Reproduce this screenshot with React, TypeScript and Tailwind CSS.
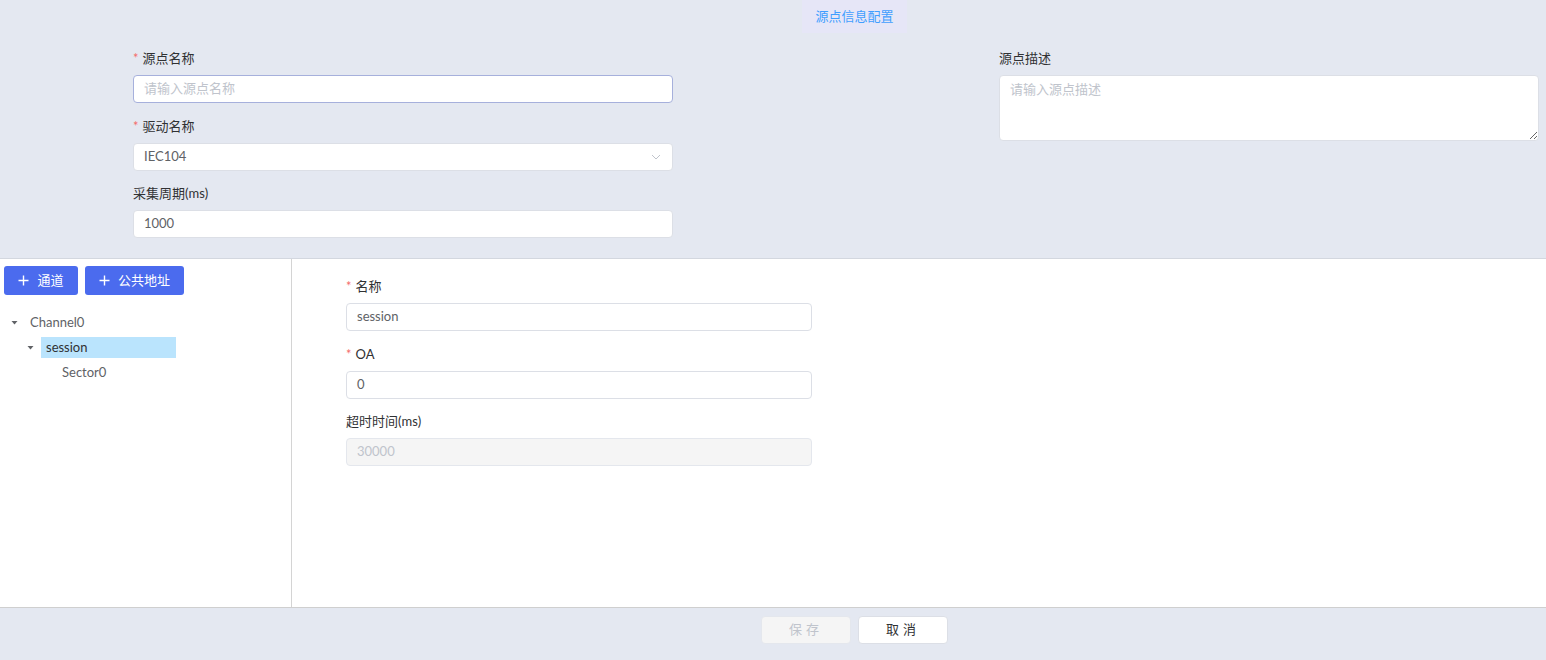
import { ReactNode } from "react";

const font = { fontFamily: 'Lato, "Noto Sans CJK SC", sans-serif' };

const Label = ({ children, required }: { children: ReactNode; required?: boolean }) => (
  <div className="h-5 mb-[7px] flex items-center text-[13px] text-[#303133] leading-5">
    {required && <span className="text-[#f56c6c] mr-1 text-[13px]">*</span>}
    {children}
  </div>
);

const Caret = () => (
  <svg width="9" height="9" viewBox="0 0 9 9" className="shrink-0">
    <path d="M1.5 3 L7.5 3 L4.5 6.5 Z" fill="#606266" />
  </svg>
);

const Chevron = () => (
  <svg width="12" height="12" viewBox="0 0 12 12">
    <path d="M2 4 L6 8 L10 4" fill="none" stroke="#c0c4cc" strokeWidth="1" />
  </svg>
);

const Plus = () => (
  <svg width="11" height="11" viewBox="0 0 11 11" className="shrink-0">
    <path d="M5.5 0.5 V10.5 M0.5 5.5 H10.5" stroke="white" strokeWidth="1.4" />
  </svg>
);

export default function App() {
  return (
    <div className="h-[660px] w-full flex flex-col bg-[#e4e8f1]" style={font}>
      {/* top config */}
      <div className="h-[259px] shrink-0 border-b border-[#d3d7df]">
        <div className="h-[33px] pl-[802px]">
          <div className="w-[105px] h-full bg-[#e6e6f7] flex items-center justify-center text-[13px] text-[#409eff]">
            源点信息配置
          </div>
        </div>
        <div className="flex pl-[133px] pt-[15px] gap-[326px]">
          <div className="w-[540px]">
            <Label required>源点名称</Label>
            <div className="h-7 rounded-[4px] border border-[#a6b0dc] bg-white flex items-center px-[10px] text-[13px] text-[#c0c4cc]">
              请输入源点名称
            </div>
            <div className="mt-[12.5px]">
              <Label required>驱动名称</Label>
              <div className="h-7 rounded-[4px] border border-[#dcdfe6] bg-white flex items-center justify-between pl-[10px] pr-[10px] text-[13px] text-[#606266]">
                <span>IEC104</span>
                <Chevron />
              </div>
            </div>
            <div className="mt-[12.5px]">
              <Label>采集周期(ms)</Label>
              <div className="h-7 rounded-[4px] border border-[#dcdfe6] bg-white flex items-center px-[10px] text-[13px] text-[#606266]">
                1000
              </div>
            </div>
          </div>
          <div className="w-[540px]">
            <Label>源点描述</Label>
            <textarea
              placeholder="请输入源点描述"
              className="block w-full h-[66px] rounded-[4px] border border-[#dcdfe6] bg-white px-[10px] py-[4px] text-[13px] text-[#606266] placeholder:text-[#c0c4cc] outline-none"
              style={font}
            />
          </div>
        </div>
      </div>

      {/* middle */}
      <div className="flex-1 flex bg-white border-b border-[#cfcfcf]">
        <div className="w-[292px] shrink-0 border-r border-[#d4d4d4] pt-[7px] pl-1">
          <div className="flex gap-[7px]">
            <button className="w-[74px] h-[29px] rounded-[3px] bg-[#4b6bee] text-white text-[13px] flex items-center justify-center gap-[8px]">
              <Plus />
              <span>通道</span>
            </button>
            <button className="w-[99px] h-[29px] rounded-[3px] bg-[#4b6bee] text-white text-[13px] flex items-center justify-center gap-[8px]">
              <Plus />
              <span>公共地址</span>
            </button>
          </div>
          <div className="mt-[15px] text-[13px] text-[#606266]">
            <div className="h-[25px] flex items-center pl-[6px]">
              <Caret />
              <span className="ml-[11px]">Channel0</span>
            </div>
            <div className="h-[25px] flex items-center pl-[22px]">
              <Caret />
              <span className="ml-[6px] w-[135px] h-[21px] bg-[#bae4fd] flex items-center pl-[5px] text-[#303133]">session</span>
            </div>
            <div className="h-[25px] flex items-center pl-[58px]">
              <span>Sector0</span>
            </div>
          </div>
        </div>
        <div className="flex-1 pl-[54px] pt-[17px]">
          <div className="w-[466px]">
            <Label required>名称</Label>
            <div className="h-7 rounded-[4px] border border-[#dcdfe6] bg-white flex items-center px-[10px] text-[13px] text-[#606266]">
              session
            </div>
            <div className="mt-[12.5px]">
              <Label required>OA</Label>
              <div className="h-7 rounded-[4px] border border-[#dcdfe6] bg-white flex items-center px-[10px] text-[13px] text-[#606266]">
                0
              </div>
            </div>
            <div className="mt-[12.5px]">
              <Label>超时时间(ms)</Label>
              <div className="h-7 rounded-[4px] border border-[#e4e7ed] bg-[#f5f5f5] flex items-center px-[10px] text-[13px] text-[#c0c4cc]">
                30000
              </div>
            </div>
          </div>
        </div>
      </div>

      {/* footer */}
      <div className="h-[52px] shrink-0 flex items-start pt-2 pl-[761px] gap-[7px]">
        <button className="w-[90px] h-7 rounded-[4px] border border-[#e4e7ed] bg-[#f5f5f5] text-[13px] text-[#c0c4cc] tracking-[4px]">
          保存
        </button>
        <button className="w-[90px] h-7 rounded-[4px] border border-[#dcdfe6] bg-white text-[13px] text-[#303133] tracking-[4px]">
          取消
        </button>
      </div>
    </div>
  );
}
